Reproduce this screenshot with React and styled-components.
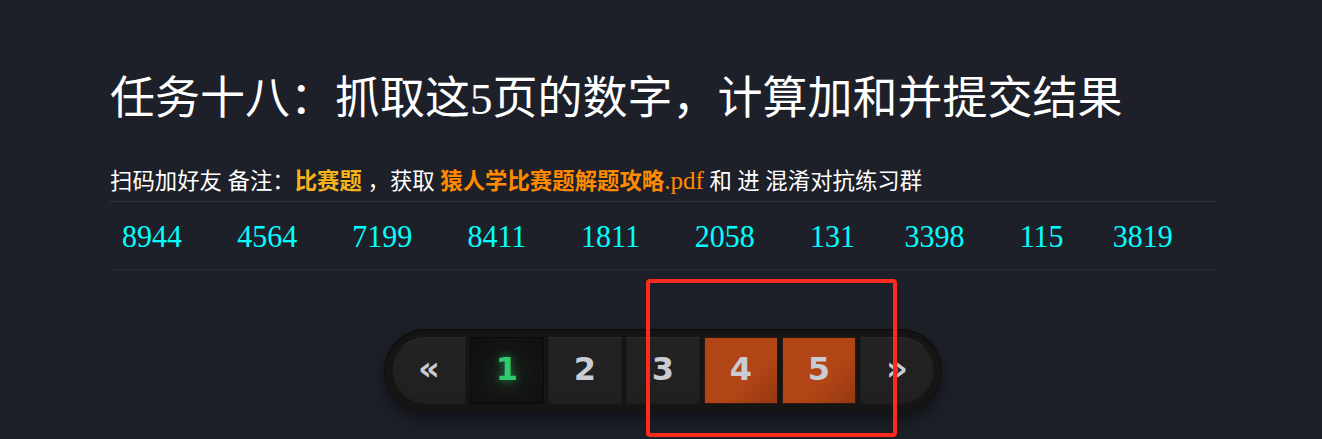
import React from "react";
import styled, { createGlobalStyle } from "styled-components";

const Global = createGlobalStyle`
  html, body { margin: 0; padding: 0; }
  body {
    background: #1e2029;
    font-family: "Liberation Serif", "Noto Sans CJK SC", serif;
    color: #ffffff;
    min-height: 439px;
    overflow: hidden;
  }
`;

const Page = styled.div`
  position: relative;
  width: 1322px;
  height: 439px;
`;

const Container = styled.main`
  width: 1106px;
  margin: 0 auto;
  padding-left: 4px;
  padding-top: 72px;
`;

const Title = styled.h1`
  margin: 0 0 39px;
  font-size: 45px;
  font-weight: 400;
  line-height: 1.2;
  color: #ffffff;
  font-family: "Liberation Serif", "Noto Sans CJK SC", serif;
`;

const Notice = styled.p`
  margin: 0;
  font-size: 22.4px;
  line-height: 1.3;
  color: #ffffff;
  padding-bottom: 3px;
`;

const Hl = styled.b`
  color: ${(p) => p.$tone};
  font-weight: 700;
`;

const Plain = styled.span`
  color: ${(p) => p.$tone};
  font-size: 25px;
`;

const NumTable = styled.table`
  width: 100%;
  border-collapse: collapse;
`;

const Cell = styled.td`
  padding: 12px;
  border-top: 1px solid #30333c;
  border-bottom: 1px solid #2a2d35;
  font-family: "Liberation Serif", serif;
  font-size: 30px;
  line-height: 43px;
  color: #00ffff;
  vertical-align: middle;
`;

const Digits = styled.span`
  display: inline-block;
  transform: scaleY(1.08);
`;

const PagerRow = styled.nav`
  display: flex;
  justify-content: center;
  margin-top: 59px;
`;

const Pill = styled.div`
  display: flex;
  gap: 4px;
  padding: 8px;
  background: #151515;
  border-radius: 42px;
  box-shadow: 0 8px 18px rgba(0, 0, 0, 0.45), inset 0 1px 2px rgba(0, 0, 0, 0.6);
`;

const PageBtn = styled.div`
  width: 74px;
  height: 67px;
  box-sizing: border-box;
  display: flex;
  align-items: center;
  justify-content: center;
  font-family: "DejaVu Sans", sans-serif;
  font-weight: 700;
  font-size: ${(p) => (p.$arrow ? "34px" : "32px")};
  color: ${(p) => (p.$active ? "#2fcc6e" : "#c9ccd3")};
  text-shadow: ${(p) => (p.$active ? "0 0 8px rgba(46, 204, 113, 0.55)" : "none")};
  background: ${(p) =>
    p.$active
      ? "radial-gradient(circle at 50% 55%, #1a231c 0%, #121312 55%, #0f0f0f 100%)"
      : p.$hot
      ? "linear-gradient(135deg, #b14516 0%, #b14516 62%, #953811 100%)"
      : "linear-gradient(180deg, #232323 0%, #202020 100%)"};
  border: 1px solid ${(p) => (p.$active ? "#0a0a0a" : p.$hot ? "#2a1a12" : "#1b1b1b")};
  border-top-color: ${(p) => (p.$active ? "#0a0a0a" : p.$hot ? "#2a1a12" : "#2c2c2c")};
  border-radius: ${(p) =>
    p.$side === "left" ? "34px 0 0 34px" : p.$side === "right" ? "0 34px 34px 0" : "0"};
  padding-bottom: ${(p) => (p.$arrow ? "4px" : "2px")};
`;

const Marker = styled.div`
  position: absolute;
  left: 646px;
  top: 279px;
  width: 251px;
  height: 158px;
  box-sizing: border-box;
  border: 4px solid #fe2a1c;
  border-radius: 4px;
  pointer-events: none;
`;

const numbers = ["8944", "4564", "7199", "8411", "1811", "2058", "131", "3398", "115", "3819"];

export default function App() {
  return (
    <Page>
      <Global />
      <Container>
        <Title>任务十八：抓取这5页的数字，计算加和并提交结果</Title>
        <Notice>
          扫码加好友 备注：<Hl $tone="#f7b31b">比赛题</Hl> ，获取{" "}
          <Hl $tone="#ff8a00">猿人学比赛题解题攻略</Hl>
          <Plain $tone="#ff8a00">.pdf</Plain> 和 进 混淆对抗练习群
        </Notice>
        <NumTable>
          <tbody>
            <tr>
              {numbers.map((n) => (
                <Cell key={n}>
                  <Digits>{n}</Digits>
                </Cell>
              ))}
            </tr>
          </tbody>
        </NumTable>
        <PagerRow>
          <Pill>
            <PageBtn $side="left" $arrow>«</PageBtn>
            <PageBtn $active>1</PageBtn>
            <PageBtn>2</PageBtn>
            <PageBtn>3</PageBtn>
            <PageBtn $hot>4</PageBtn>
            <PageBtn $hot>5</PageBtn>
            <PageBtn $side="right" $arrow>»</PageBtn>
          </Pill>
        </PagerRow>
      </Container>
      <Marker />
    </Page>
  );
}
